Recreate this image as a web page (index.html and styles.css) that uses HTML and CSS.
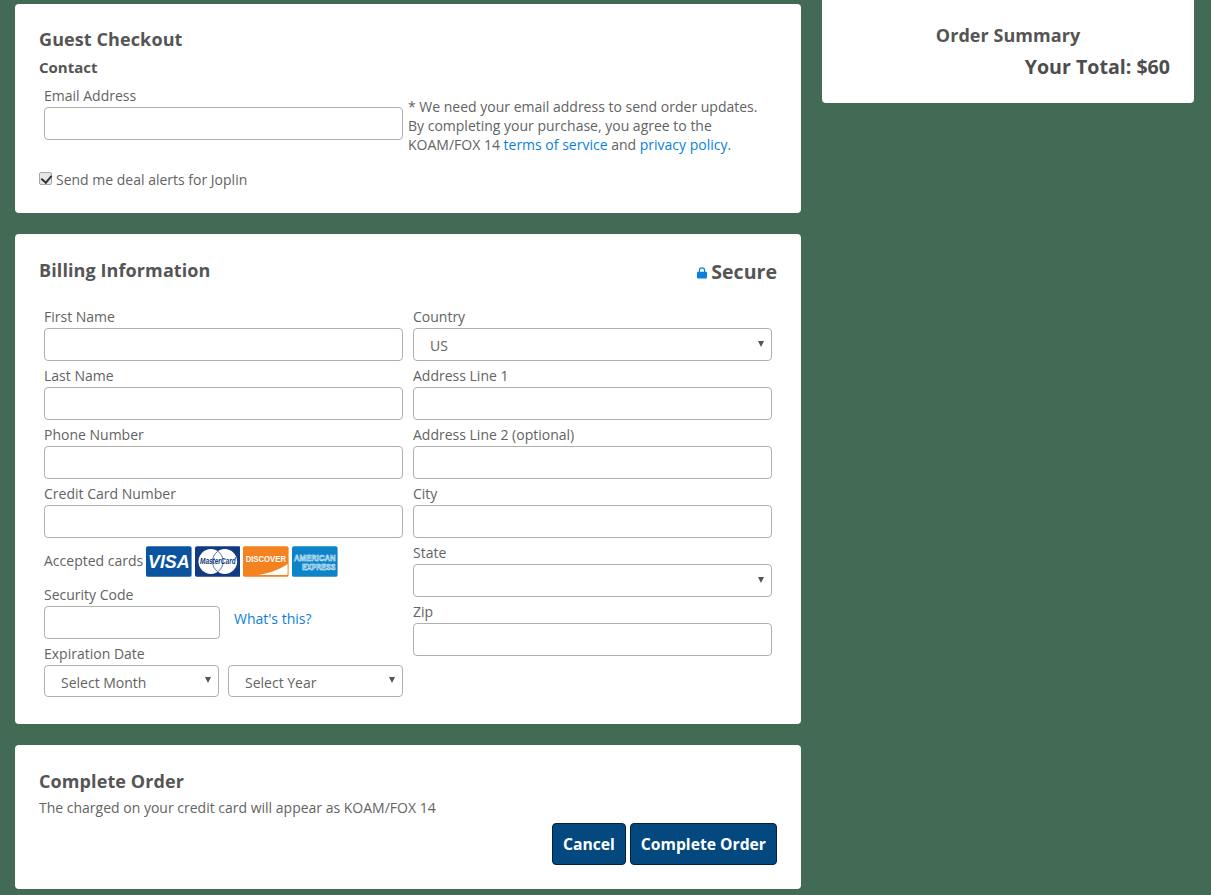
FILE: index.html
```html
<!DOCTYPE html>
<html lang="en">
<head>
<meta charset="utf-8">
<title>Guest Checkout</title>
<link rel="stylesheet" href="styles.css">
</head>
<body>
<div class="page">
  <main class="main">
    <section class="card card-guest">
      <h2 class="title">Guest Checkout</h2>
      <h3 class="subtitle">Contact</h3>
      <div class="contact-row">
        <div class="field">
          <label class="label">Email Address</label>
          <input class="input" type="text">
        </div>
        <p class="note">* We need your email address to send order updates. By completing your purchase, you agree to the KOAM/FOX 14 <a href="#">terms of service</a> and <a href="#">privacy policy.</a></p>
      </div>
      <label class="alerts"><input class="check" type="checkbox" checked> Send me deal alerts for Joplin</label>
    </section>

    <section class="card card-billing">
      <div class="billing-head">
        <h2 class="title">Billing Information</h2>
        <div class="secure">
          <svg class="lock" width="10" height="12" viewBox="0 0 10 12"><path d="M1.8 5V3.4a3.2 3.2 0 0 1 6.4 0V5H7V3.4a2 2 0 0 0-4 0V5z" fill="#0b7fdc"/><rect y="4.8" width="10" height="6.7" rx="1" fill="#0b7fdc"/></svg>
          <span>Secure</span>
        </div>
      </div>
      <div class="billing-grid">
        <div class="col">
          <div class="field"><label class="label">First Name</label><input class="input" type="text"></div>
          <div class="field"><label class="label">Last Name</label><input class="input" type="text"></div>
          <div class="field"><label class="label">Phone Number</label><input class="input" type="text"></div>
          <div class="field"><label class="label">Credit Card Number</label><input class="input" type="text"></div>
          <div class="accepted">
            <span class="accepted-text">Accepted cards</span>
            <svg class="cc" viewBox="0 0 46 31"><rect width="46" height="31" rx="2" fill="#0a539f"/><text x="23" y="22" text-anchor="middle" font-family="Liberation Sans" font-size="18" font-weight="700" font-style="italic" fill="#fff">VISA</text></svg>
            <svg class="cc" viewBox="0 0 46 31"><rect width="46" height="31" rx="2" fill="#123a82"/><circle cx="16" cy="15.5" r="12.5" fill="#fff"/><circle cx="30" cy="15.5" r="12.5" fill="#fff"/><path d="M23 5.2a12.5 12.5 0 0 1 0 20.6a12.5 12.5 0 0 1 0-20.6z" fill="none" stroke="#123a82" stroke-width=".7"/><text transform="translate(23 18.5) scale(.77 1)" text-anchor="middle" font-family="Liberation Sans" font-size="8.5" font-weight="700" font-style="italic" fill="#123a82">MasterCard</text></svg>
            <svg class="cc" viewBox="0 0 46 31"><rect width="46" height="31" rx="2" fill="#f58220"/><path d="M16 29 C28 27 38 23 45 18 V28 a1 1 0 0 1-1 1z" fill="#fff"/><text transform="translate(23 16.5) scale(.82 1)" text-anchor="middle" font-family="Liberation Sans" font-size="9.5" font-weight="700" fill="#fff">DISCOVER</text></svg>
            <svg class="cc" viewBox="0 0 46 31"><rect width="46" height="31" rx="2" fill="#0d84c8"/><text transform="translate(23 14.5) scale(.78 1)" text-anchor="middle" font-family="Liberation Sans" font-size="10" font-weight="700" fill="#3f9fd9" stroke="#e6f4fc" stroke-width=".55">AMERICAN</text><text transform="translate(27 24) scale(.72 1)" text-anchor="middle" font-family="Liberation Sans" font-size="10" font-weight="700" fill="#3f9fd9" stroke="#e6f4fc" stroke-width=".55">EXPRESS</text></svg>
          </div>
          <div class="field">
            <label class="label">Security Code</label>
            <div class="security-row"><input class="input input-code" type="text"><a class="help" href="#">What's this?</a></div>
          </div>
          <div class="field">
            <label class="label">Expiration Date</label>
            <div class="expiry-row">
              <div class="select-wrap select-short"><select class="select"><option>Select Month</option></select></div>
              <div class="select-wrap select-short"><select class="select"><option>Select Year</option></select></div>
            </div>
          </div>
        </div>
        <div class="col">
          <div class="field"><label class="label">Country</label><div class="select-wrap"><select class="select"><option>US</option></select></div></div>
          <div class="field"><label class="label">Address Line 1</label><input class="input" type="text"></div>
          <div class="field"><label class="label">Address Line 2 (optional)</label><input class="input" type="text"></div>
          <div class="field"><label class="label">City</label><input class="input" type="text"></div>
          <div class="field"><label class="label">State</label><div class="select-wrap"><select class="select"><option></option></select></div></div>
          <div class="field"><label class="label">Zip</label><input class="input" type="text"></div>
        </div>
      </div>
    </section>

    <section class="card card-complete">
      <h2 class="title">Complete Order</h2>
      <p class="charged">The charged on your credit card will appear as KOAM/FOX 14</p>
      <div class="actions">
        <button class="btn" type="button">Cancel</button>
        <button class="btn" type="button">Complete Order</button>
      </div>
    </section>
  </main>

  <aside class="side">
    <section class="summary">
      <h2 class="summary-title">Order Summary</h2>
      <p class="total">Your Total: $60</p>
    </section>
  </aside>
</div>
</body>
</html>
```
FILE: styles.css
```css
* { box-sizing: border-box; }
html, body { margin: 0; padding: 0; }
body {
  height: 895px;
  overflow: hidden;
  background: #426a54;
  color: #636363;
  font-family: "Open Sans", sans-serif;
  font-size: 14px;
  line-height: 19px;
}
a { color: #0b7fdc; text-decoration: none; }
.page { display: flex; align-items: flex-start; gap: 21px; padding-left: 15px; }
.main { width: 786px; padding-top: 4px; display: flex; flex-direction: column; gap: 21px; }
.side { width: 372px; }
.card { background: #fff; border-radius: 4px; padding: 0 24px; }
.card-guest { height: 209px; padding-top: 25px; }
.card-billing { height: 490px; padding-top: 26px; }
.card-complete { height: 144px; padding-top: 26px; }
.title { margin: 0; font-size: 18px; line-height: 21px; font-weight: 700; color: #555; letter-spacing: .1px; }
.subtitle { margin: 8px 0 0; font-size: 15px; line-height: 19px; font-weight: 700; color: #555; }
.contact-row { display: flex; gap: 5px; padding-left: 5px; margin-top: 9px; }
.contact-row .field { width: 359px; flex: none; }
.note { margin: 11px 0 0; width: 360px; line-height: 19px; }
.field { display: flex; flex-direction: column; }
.label { display: block; height: 21px; line-height: 19px; }
.input, .select {
  display: block;
  width: 100%;
  height: 33px;
  border: 1px solid #b0b0b0;
  border-radius: 4px;
  background: #fff;
  font: inherit;
  color: #636363;
  outline: none;
}
.input { padding: 0 8px; }
.select { appearance: none; -webkit-appearance: none; padding: 2px 30px 0 16px; }
.select-wrap { position: relative; }
.select-wrap::after {
  content: "";
  position: absolute;
  right: 8px;
  top: 13px;
  border-left: 3px solid transparent;
  border-right: 3px solid transparent;
  border-top: 6px solid #555;
}
.alerts { display: flex; align-items: center; gap: 4px; margin-top: 16px; line-height: 19px; }
.check {
  appearance: none;
  -webkit-appearance: none;
  position: relative;
  top: -1px;
  width: 13px;
  height: 13px;
  margin: 0;
  background: #e6e6e6;
  border: 1px solid #a6a6a6;
  border-radius: 2px;
}
.check:checked::after {
  content: "";
  position: absolute;
  left: 3px;
  top: 0;
  width: 5px;
  height: 8px;
  border: solid #333;
  border-width: 0 2px 2px 0;
  transform: rotate(40deg);
}
.billing-head { display: flex; justify-content: space-between; align-items: flex-start; }
.secure { display: flex; align-items: center; gap: 4px; font-size: 19.6px; line-height: 27px; font-weight: 700; color: #555; margin-top: -2px; }
.lock { margin-top: 3px; }
.billing-grid { display: flex; gap: 10px; padding: 0 5px; margin-top: 22px; }
.col { width: 359px; display: flex; flex-direction: column; gap: 5px; }
.accepted { display: flex; align-items: center; gap: 3px; height: 31px; margin: 3px 0; }
.accepted-text { padding-bottom: 2px; }
.cc { display: block; flex: none; width: 45.6px; height: 31px; }
.security-row { display: flex; align-items: center; gap: 14px; }
.input-code { width: 176px; }
.help { padding-bottom: 9px; }
.expiry-row { display: flex; gap: 9px; }
.select-short { width: 175px; }
.select-short .select { height: 32px; }
.select-short::after { top: 12px; }
.charged { margin: 6px 0 0; }
.actions { display: flex; justify-content: flex-end; gap: 4px; margin-top: 6px; }
.btn {
  height: 42px;
  padding: 0 10px;
  background: #03487e;
  border: 1px solid #02233d;
  border-radius: 4px;
  color: #fff;
  font: 700 15.7px "Open Sans", sans-serif;
}
.summary { background: #fff; border-radius: 0 0 4px 4px; height: 103px; padding: 25px 24px 0; display: flex; flex-direction: column; }
.summary-title { margin: 0; text-align: center; font-size: 18px; line-height: 21px; font-weight: 700; color: #555; letter-spacing: .05px; }
.total { margin: 7px 0 0; text-align: right; font-size: 19.6px; line-height: 27px; font-weight: 700; color: #4d4d4d; }
```
